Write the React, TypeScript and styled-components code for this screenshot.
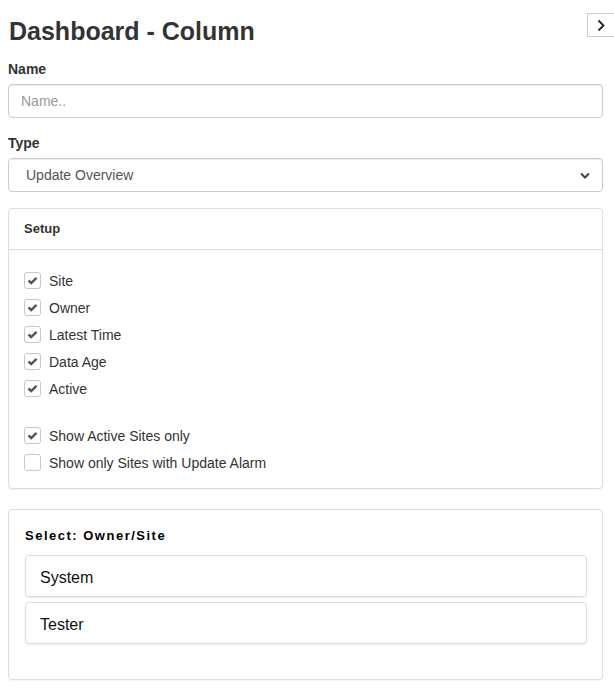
import { useState } from "react";
import styled, { createGlobalStyle } from "styled-components";

const GlobalStyle = createGlobalStyle`
  html, body {
    margin: 0;
    padding: 0;
    background: #fff;
    overflow-x: hidden;
  }
  body {
    font-family: "Liberation Sans", Arial, Helvetica, sans-serif;
    font-size: 14px;
    line-height: 20px;
    color: #333;
  }
  * {
    box-sizing: border-box;
  }
`;

const Page = styled.div`
  padding: 0 11px 24px 8px;
`;

const HeaderRow = styled.div`
  display: flex;
  align-items: flex-start;
  justify-content: space-between;
`;

const Title = styled.h2`
  margin: 17px 0 0 1px;
  font-size: 25px;
  line-height: 28px;
  font-weight: 700;
  color: #333;
`;

const ToggleButton = styled.button`
  margin: 13px -14px 0 0;
  width: 30px;
  height: 24px;
  padding: 0 0 0 9px;
  border: 1px solid #ccc;
  background: #fff;
  display: flex;
  align-items: center;
  justify-content: flex-start;
  cursor: pointer;
`;

const FormGroup = styled.div`
  margin-top: 14px;
  & + & {
    margin-top: 15px;
  }
`;

const Label = styled.label`
  display: block;
  font-weight: 700;
  font-size: 14px;
  line-height: 20px;
  margin-bottom: 5px;
  color: #333;
`;

const TextInput = styled.input`
  display: block;
  width: 100%;
  height: 34px;
  padding: 6px 12px;
  font-family: inherit;
  font-size: 14px;
  color: #555;
  border: 1px solid #ccc;
  border-radius: 4px;
  box-shadow: inset 0 1px 1px rgba(0, 0, 0, 0.075);
  outline: none;

  &::placeholder {
    color: #999;
  }
`;

const SelectWrap = styled.div`
  position: relative;
`;

const Select = styled.select`
  display: block;
  width: 100%;
  height: 34px;
  padding: 6px 30px 6px 17px;
  font-family: inherit;
  font-size: 14px;
  color: #555;
  background: #fff;
  border: 1px solid #ccc;
  border-radius: 4px;
  box-shadow: inset 0 1px 1px rgba(0, 0, 0, 0.075);
  appearance: none;
  outline: none;
`;

const SelectArrow = styled.svg`
  position: absolute;
  right: 13px;
  top: 14px;
  pointer-events: none;
`;

const Panel = styled.div<{ $gap: number }>`
  margin-top: ${(p) => p.$gap}px;
  border: 1px solid #ddd;
  border-radius: 4px;
  background: #fff;
  box-shadow: 0 1px 1px rgba(0, 0, 0, 0.05);
`;

const PanelHeading = styled.div`
  padding: 10px 15px;
  border-bottom: 1px solid #ddd;
  font-size: 13px;
  font-weight: 700;
  line-height: 20px;
  color: #333;
`;

const PanelBody = styled.div`
  padding: 17px 15px 12px;
`;

const CheckGroup = styled.div`
  & + & {
    margin-top: 20px;
  }
`;

const CheckRow = styled.label`
  display: flex;
  align-items: center;
  height: 27px;
  gap: 8px;
  cursor: pointer;
  color: #333;
`;

const Box = styled.span`
  width: 17px;
  height: 17px;
  border: 1px solid #c8c8c8;
  border-radius: 3px;
  background: #fff;
  display: flex;
  align-items: center;
  justify-content: center;
  flex-shrink: 0;
`;

const SelectPanelBody = styled.div`
  padding: 16px 15px 35px 16px;
`;

const SelectTitle = styled.div`
  font-size: 13px;
  font-weight: 700;
  letter-spacing: 1.5px;
  line-height: 20px;
  color: #000;
  margin-bottom: 9px;
`;

const ListItem = styled.div`
  height: 42px;
  display: flex;
  align-items: center;
  padding: 3px 0 0 14px;
  font-size: 16px;
  color: #111;
  border: 1px solid #ddd;
  border-radius: 4px;
  box-shadow: 0 1px 2px rgba(0, 0, 0, 0.08);
  cursor: pointer;

  & + & {
    margin-top: 5px;
  }
`;

const Check = ({ on }: { on: boolean }) => (
  <Box>
    {on && (
      <svg width="11" height="9" viewBox="0 0 11 9">
        <polyline points="1.5,4.5 4.2,7 9.5,1.8" fill="none" stroke="#555" strokeWidth="2.4" />
      </svg>
    )}
  </Box>
);

const columns = ["Site", "Owner", "Latest Time", "Data Age", "Active"];
const filters = ["Show Active Sites only", "Show only Sites with Update Alarm"];
const owners = ["System", "Tester"];

const App = () => {
  const [cols, setCols] = useState<boolean[]>([true, true, true, true, true]);
  const [flt, setFlt] = useState<boolean[]>([true, false]);

  const toggle = (arr: boolean[], i: number) => arr.map((v, j) => (j === i ? !v : v));

  return (
    <>
      <GlobalStyle />
      <Page>
        <HeaderRow>
          <Title>Dashboard - Column</Title>
          <ToggleButton>
            <svg width="8" height="13" viewBox="0 0 8 13">
              <polyline points="1.5,1.5 6.5,6.5 1.5,11.5" fill="none" stroke="#222" strokeWidth="1.8" />
            </svg>
          </ToggleButton>
        </HeaderRow>

        <FormGroup>
          <Label>Name</Label>
          <TextInput placeholder="Name.." />
        </FormGroup>

        <FormGroup>
          <Label>Type</Label>
          <SelectWrap>
            <Select defaultValue="update">
              <option value="update">Update Overview</option>
            </Select>
            <SelectArrow width="10" height="7" viewBox="0 0 10 7">
              <polyline points="1,1.5 5,5.5 9,1.5" fill="none" stroke="#444" strokeWidth="2" />
            </SelectArrow>
          </SelectWrap>
        </FormGroup>

        <Panel $gap={16}>
          <PanelHeading>Setup</PanelHeading>
          <PanelBody>
            <CheckGroup>
              {columns.map((c, i) => (
                <CheckRow key={c} onClick={() => setCols(toggle(cols, i))}>
                  <Check on={cols[i]} />
                  {c}
                </CheckRow>
              ))}
            </CheckGroup>
            <CheckGroup>
              {filters.map((f, i) => (
                <CheckRow key={f} onClick={() => setFlt(toggle(flt, i))}>
                  <Check on={flt[i]} />
                  {f}
                </CheckRow>
              ))}
            </CheckGroup>
          </PanelBody>
        </Panel>

        <Panel $gap={20}>
          <SelectPanelBody>
            <SelectTitle>Select: Owner/Site</SelectTitle>
            {owners.map((o) => (
              <ListItem key={o}>{o}</ListItem>
            ))}
          </SelectPanelBody>
        </Panel>
      </Page>
    </>
  );
};

export default App;
